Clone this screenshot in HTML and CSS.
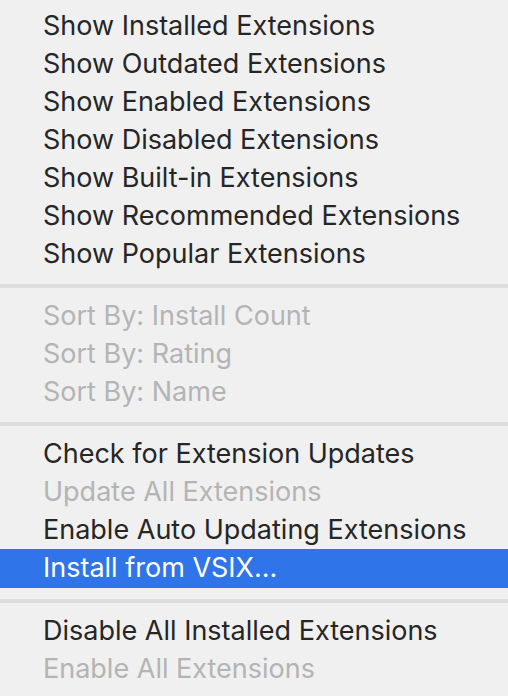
FILE: index.html
```html
<!DOCTYPE html>
<html>
<head>
<meta charset="utf-8">
<link rel="stylesheet" href="styles.css">
</head>
<body>
<div class="menu">
  <div class="group">
    <div class="item">Show Installed Extensions</div>
    <div class="item">Show Outdated Extensions</div>
    <div class="item">Show Enabled Extensions</div>
    <div class="item">Show Disabled Extensions</div>
    <div class="item">Show Built-in Extensions</div>
    <div class="item">Show Recommended Extensions</div>
    <div class="item">Show Popular Extensions</div>
  </div>
  <div class="sep"></div>
  <div class="group">
    <div class="item disabled">Sort By: Install Count</div>
    <div class="item disabled">Sort By: Rating</div>
    <div class="item disabled">Sort By: Name</div>
  </div>
  <div class="sep"></div>
  <div class="group">
    <div class="item">Check for Extension Updates</div>
    <div class="item disabled">Update All Extensions</div>
    <div class="item">Enable Auto Updating Extensions</div>
    <div class="item selected">Install from VSIX...</div>
  </div>
  <div class="sep"></div>
  <div class="group">
    <div class="item">Disable All Installed Extensions</div>
    <div class="item disabled">Enable All Extensions</div>
  </div>
</div>
</body>
</html>
```
FILE: styles.css
```css
html, body {
  margin: 0;
  padding: 0;
  background: #f0f0f0;
}
.menu {
  width: 508px;
  height: 696px;
  box-sizing: border-box;
  padding-top: 7px;
  background: #f0f0f0;
  font-family: Inter, "Noto Sans", sans-serif;
  font-size: 27px;
  color: #262626;
  overflow: hidden;
}
.group {
  display: flex;
  flex-direction: column;
}
.item {
  height: 38px;
  line-height: 38px;
  padding-left: 43px;
  white-space: nowrap;
}
.item.disabled {
  color: #b4b4b4;
}
.item.selected {
  background: #2f74e8;
  color: #ffffff;
  height: 39px;
}
.sep {
  height: 4px;
  margin: 11px 0 9px;
  background: #dddddd;
}
```
